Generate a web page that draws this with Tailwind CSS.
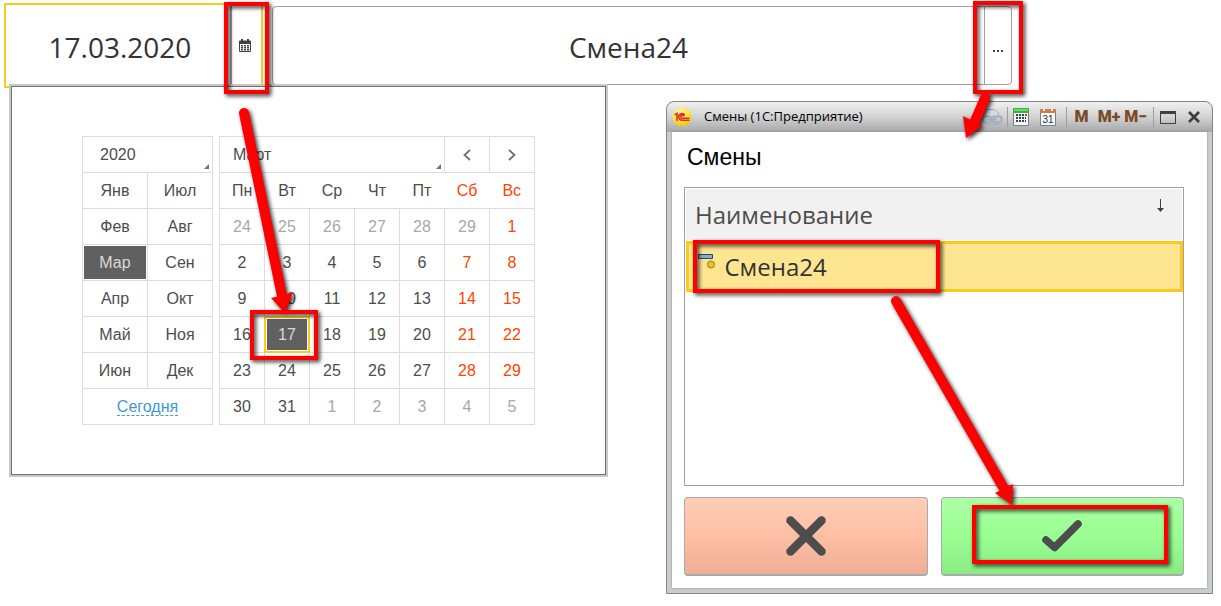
<!DOCTYPE html>
<html lang="ru">
<head>
<meta charset="utf-8">
<title>Смены</title>
<script src="https://cdn.jsdelivr.net/npm/@tailwindcss/browser@4"></script>
</head>
<body class="relative min-h-screen bg-white font-['Liberation_Sans',Arial,sans-serif] text-base text-[#4d4d4d]">

<header class="flex items-start gap-[9px] pt-[3px] pr-[209px] pl-1">
  <div class="flex h-[85px] w-[259px] border-2 border-[#fcca1c] bg-white">
    <input id="date" aria-label="Дата" value="17.03.2020" class="min-w-0 flex-1 pt-[2px] pr-2 pl-3 text-center font-['Open_Sans','Noto_Sans',sans-serif] text-[28px] text-[#333] outline-none">
    <button aria-label="Открыть календарь" class="flex w-[31px] items-center justify-center border-l-2 border-[#a0a0a0] pr-1">
      <svg class="h-[13px] w-3" viewBox="0 0 12 13" fill="#404040"><path d="M1 1.500h1V0h2v1.500h4V0h2v1.500h1a1 1 0 0 1 1 1V12a1 1 0 0 1-1 1H1a1 1 0 0 1-1-1V2.500a1 1 0 0 1 1-1Z"/><path fill="#fff" d="M1 5h10v7H1Z"/><path d="M2 6h2v1.400H2zM5 6h2v1.400H5zM8 6h2v1.400H8zM2 8h2v1.400H2zM5 8h2v1.400H5zM8 8h2v1.400H8zM2 10h2v1.400H2zM5 10h2v1.400H5zM8 10h2v1.400H8z"/></svg>
    </button>
  </div>
  <div class="mt-[3px] flex h-[79px] flex-1 rounded border border-[#a0a0a0] bg-white">
    <input id="shift" aria-label="Смена" value="Смена24" class="min-w-0 flex-1 pt-[2px] text-center font-['Open_Sans','Noto_Sans',sans-serif] text-[28px] text-[#333] outline-none">
    <button aria-label="Выбрать смену" class="flex w-[27px] items-center justify-center gap-[2px] border-l border-[#a0a0a0] pt-[10px]">
      <i class="size-[2px] bg-[#404040]"></i><i class="size-[2px] bg-[#404040]"></i><i class="size-[2px] bg-[#404040]"></i>
    </button>
  </div>
</header>

<main class="-mt-1 flex items-start pr-2 pl-[9px]">
  <section aria-label="Календарь" class="relative w-[599px] shrink-0 border-2 border-[#c8c8c8] bg-white">
    <div class="flex items-start gap-[6px] border border-[#707070] px-[70px] pt-[49px] pb-[49px]">
      <table class="w-[131px] table-fixed border-collapse text-center [&_td]:border [&_td]:border-[#dcdcdc] [&_td]:p-0 [&_tr]:h-9">
        <tr><td colspan="2"><button class="relative block h-[35px] w-full pl-[17px] text-left">2020<svg class="absolute right-[3px] bottom-[3px] size-[5px]" viewBox="0 0 5 5"><path d="M5 0v5H0z" fill="#707070"/></svg></button></td></tr>
        <tr><td><button>Янв</button></td><td><button>Июл</button></td></tr>
        <tr><td><button>Фев</button></td><td><button>Авг</button></td></tr>
        <tr><td><button class="m-px block h-[33px] w-[62px] bg-[#606060] text-[#d8d8d8]">Мар</button></td><td><button>Сен</button></td></tr>
        <tr><td><button>Апр</button></td><td><button>Окт</button></td></tr>
        <tr><td><button>Май</button></td><td><button>Ноя</button></td></tr>
        <tr><td><button>Июн</button></td><td><button>Дек</button></td></tr>
        <tr><td colspan="2"><a href="#" class="border-b border-dashed border-[#4296d2] text-[#4296d2]">Сегодня</a></td></tr>
      </table>
      <table class="w-[316px] table-fixed border-collapse text-center [&_td]:border [&_td]:border-[#dcdcdc] [&_td]:p-0 [&_th]:p-0 [&_th]:font-normal [&_tr]:h-9">
        <tr><td colspan="5"><button class="relative block h-[35px] w-full pl-[13px] text-left">Март<svg class="absolute right-[3px] bottom-[3px] size-[5px]" viewBox="0 0 5 5"><path d="M5 0v5H0z" fill="#707070"/></svg></button></td>
          <td><button aria-label="Предыдущий месяц" class="flex h-[35px] w-full items-center justify-center"><svg class="h-3 w-2" viewBox="0 0 8 12" fill="none" stroke="#707070" stroke-width="1.800"><path d="M7 1 1.500 6 7 11"/></svg></button></td>
          <td><button aria-label="Следующий месяц" class="flex h-[35px] w-full items-center justify-center"><svg class="h-3 w-2" viewBox="0 0 8 12" fill="none" stroke="#707070" stroke-width="1.800"><path d="M1 1 6.500 6 1 11"/></svg></button></td></tr>
        <tr class="border border-[#dcdcdc]"><th>Пн</th><th>Вт</th><th>Ср</th><th>Чт</th><th>Пт</th><th class="text-[#ff4500]">Сб</th><th class="text-[#ff4500]">Вс</th></tr>
        <tr class="text-[#a8a8a8]"><td>24</td><td>25</td><td>26</td><td>27</td><td>28</td><td>29</td><td class="text-[#ff4500]">1</td></tr>
        <tr><td>2</td><td>3</td><td>4</td><td>5</td><td>6</td><td class="text-[#ff4500]">7</td><td class="text-[#ff4500]">8</td></tr>
        <tr><td>9</td><td>10</td><td>11</td><td>12</td><td>13</td><td class="text-[#ff4500]">14</td><td class="text-[#ff4500]">15</td></tr>
        <tr><td>16</td><td><button class="relative -m-px block h-[37px] w-[46px] border-2 border-[#fcca1c] bg-[#606060] text-[#d8d8d8] inset-ring inset-ring-white">17</button></td><td>18</td><td>19</td><td>20</td><td class="text-[#ff4500]">21</td><td class="text-[#ff4500]">22</td></tr>
        <tr><td>23</td><td>24</td><td>25</td><td>26</td><td>27</td><td class="text-[#ff4500]">28</td><td class="text-[#ff4500]">29</td></tr>
        <tr><td>30</td><td>31</td><td class="text-[#a8a8a8]">1</td><td class="text-[#a8a8a8]">2</td><td class="text-[#a8a8a8]">3</td><td class="text-[#a8a8a8]">4</td><td class="text-[#a8a8a8]">5</td></tr>
      </table>
    </div>
  </section>

  <section aria-label="Смены" class="mt-[17px] ml-[58px] flex-1 rounded-t-lg border border-[#858585] bg-[#cbcccd] px-[5px] pb-[5px] text-black">
    <div class="-mx-[5px] flex h-[30px] items-center rounded-t-lg bg-linear-to-b from-[#f0f0f0] via-[#d2d2d3] to-[#a6a7aa] pl-[5px]">
      <svg class="size-5" viewBox="0 0 20 20"><defs><radialGradient id="g" cx=".4" cy=".25" r=".8"><stop offset="0" stop-color="#fff7b0"/><stop offset=".6" stop-color="#ffe23c"/><stop offset="1" stop-color="#eeb818"/></radialGradient></defs><circle cx="10" cy="10" r="9.500" fill="url(#g)"/><path d="M2.500 7.800 5 6.500V14M12.800 8.200A3.300 3.300 0 1 0 10.500 13.200H17.500M12 9.400A1.600 1.600 0 1 0 10.700 11.300H17.500" fill="none" stroke="#e0301e" stroke-width="1.600"/></svg>
      <h1 class="ml-3 flex-1 font-['Open_Sans','Noto_Sans',sans-serif] text-[13px] whitespace-nowrap">Смены (1С:Предприятие)</h1>
      <button aria-label="Ссылка" class="mr-1"><svg class="h-[18px] w-[22px]" viewBox="0 0 22 18" fill="none" stroke="#a4afba"><path d="M4.500 8V1.500H14L17.500 5v3" fill="#d5dae0"/><rect x="1.500" y="8.500" width="9" height="6" rx="2" stroke-width="2"/><rect x="11.500" y="8.500" width="9" height="6" rx="2" stroke-width="2"/><path d="M6 11.500h10" stroke-width="2"/><path d="M4.500 16.500h13"/></svg></button>
      <i class="mr-[5px] h-5 w-px bg-[#9d9d9f]"></i>
      <button aria-label="Калькулятор" class="mr-[11px]"><svg class="h-[18px] w-4" viewBox="0 0 16 18"><path d="M.5.5h15v17H.5z" fill="#f3f7f9" stroke="#76828c"/><path d="M0 0h16v5H0z" fill="#36b344"/><path d="M1 1h14v2H1z" fill="#62dd6a"/><path d="M3 6h2v2H3zM6 6h2v2H6zM9 6h2v2H9zM3 9h2v2H3zM6 9h2v2H6zM9 9h2v2H9zM12 9h1v2h-1zM3 12h2v2H3zM6 12h2v2H6zM9 12h2v2H9zM12 12h1v2h-1z" fill="#39434c"/><path d="M12 6h2v2h-2z" fill="#f22"/></svg></button>
      <button aria-label="Календарь" class="mr-[10px]"><svg class="h-[18px] w-4" viewBox="0 0 16 18"><path d="M.5 2.500h15v15H.5z" fill="#f5f9fc" stroke="#71818e"/><path d="M0 1h16v4H0z" fill="#c9824f"/><path d="M3 0h2v3H3zM11 0h2v3h-2z" fill="#f5e9df"/><text x="8" y="15" text-anchor="middle" font-family="Liberation Sans" font-size="10" fill="#333">31</text></svg></button>
      <i class="mr-2 h-5 w-px bg-[#9d9d9f]"></i>
      <button class="mr-[9px] font-['Roboto',sans-serif] text-base font-black text-[#7a4a26]">M</button>
      <button class="mr-1 font-['Roboto',sans-serif] text-base font-black text-[#7a4a26]">M+</button>
      <button class="mr-[6px] font-['Roboto',sans-serif] text-base font-black text-[#7a4a26]">M−</button>
      <i class="mr-[6px] h-5 w-px bg-[#9d9d9f]"></i>
      <button aria-label="Развернуть" class="mr-3 h-[13px] w-4 border border-t-[3px] border-[#404040]"></button>
      <button aria-label="Закрыть" class="mr-3"><svg class="size-3" viewBox="0 0 12 12" stroke="#3c3c3c" stroke-width="2.600"><path d="m1 1 10 10M11 1 1 11"/></svg></button>
    </div>
    <div class="bg-white pt-[10px] pr-[23px] pb-3 pl-3 shadow-[0_0_2px_#888]">
      <h2 class="ml-[3px] font-['Liberation_Sans',sans-serif] text-[23px] leading-[30px]">Смены</h2>
      <div class="mt-[15px] h-[299px] border border-[#a0a0a0]">
        <table class="w-full border-collapse text-left font-['Open_Sans','Noto_Sans',sans-serif] text-[24px]">
          <thead><tr class="h-[52px]"><th class="border border-white bg-[#f1f1f1] p-0 font-normal text-[#4d4d4d]"><div class="flex items-center justify-between pr-[18px] pl-[9px]"><span>Наименование</span><svg class="mb-[18px] h-[13px] w-[7px]" viewBox="0 0 7 13"><path d="M3 0h1v9h3L3.500 13 0 9h3z" fill="#404040"/></svg></div></th></tr></thead>
          <tbody><tr><td class="p-0"><div class="flex h-[51px] items-center gap-[9px] border-3 border-[#fcca1c] bg-[#fee591] pl-[9px] text-[#333]"><svg class="mb-3 h-4 w-[18px]" viewBox="0 0 18 16"><path d="M.5 1.500h14v4H.5z" fill="#7fadd6" stroke="#24486a"/><circle cx="13" cy="11.500" r="3.500" fill="#eebc28" stroke="#a87a10"/></svg>Смена24</div></td></tr></tbody>
        </table>
      </div>
      <div class="mt-[11px] grid grid-cols-2 gap-[13px]">
        <button aria-label="Отмена" class="flex h-[79px] items-center justify-center rounded border border-b-2 border-[#aaa] bg-linear-to-b from-[#ffcdb8] via-[#febfa5] to-[#edae96]"><svg class="size-10" viewBox="0 0 40 40" stroke="#4d4d4d" stroke-width="8.500" stroke-linecap="round"><path d="m4.500 4.500 31 31M35.500 4.500l-31 31"/></svg></button>
        <button aria-label="ОК" class="flex h-[79px] items-center justify-center rounded border border-b-2 border-[#aaa] bg-linear-to-b from-[#adffa5] via-[#9aff93] to-[#8beb84]"><svg class="h-8 w-10" viewBox="0 0 40 32" fill="none" stroke="#4d4d4d" stroke-width="7.500" stroke-linecap="round" stroke-linejoin="round"><path d="m4 20 8.500 7.500L36 4"/></svg></button>
      </div>
    </div>
  </section>
</main>

<svg class="pointer-events-none absolute top-0 left-0 h-[606px] w-[1221px] drop-shadow-[2px_2px_2px_rgb(0_0_0/0.8)]" viewBox="0 0 1221 606" fill="none" stroke="#f00" stroke-width="4" aria-hidden="true">
  <rect x="226" y="4" width="41" height="88"/>
  <rect x="975" y="3" width="46" height="89"/>
  <rect x="252" y="312" width="64" height="46"/>
  <rect x="695" y="242" width="243" height="49"/>
  <rect x="974" y="507" width="192" height="55"/>
  <g stroke-width="10" stroke-linecap="round">
    <path d="M244 113 282 296M985 98 975 121M896 301 1003 487"/>
  </g>
  <g fill="#f00" stroke="none">
    <path d="M271 298 293 293 285 313z"/>
    <path d="M963 116 982 126 966 138z"/>
    <path d="M995 493 1013 484 1012 505z"/>
  </g>
</svg>
</body>
</html>
